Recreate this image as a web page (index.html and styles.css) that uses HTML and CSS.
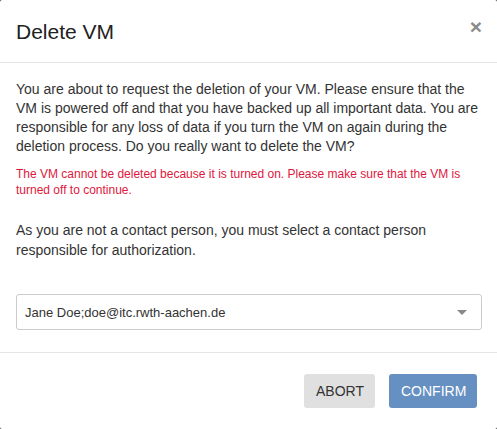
FILE: index.html
```html
<!DOCTYPE html>
<html>
<head>
<meta charset="utf-8">
<link rel="stylesheet" href="styles.css">
</head>
<body>
<div class="modal">
  <div class="modal-header">
    <h4 class="modal-title">Delete VM</h4>
    <button class="close" type="button">&times;</button>
  </div>
  <div class="modal-body">
    <p class="intro">You are about to request the deletion of your VM. Please ensure that the VM is powered off and that you have backed up all important data. You are responsible for any loss of data if you turn the VM on again during the deletion process. Do you really want to delete the VM?</p>
    <p class="error">The VM cannot be deleted because it is turned on. Please make sure that the VM is turned off to continue.</p>
    <p class="contact">As you are not a contact person, you must select a contact person responsible for authorization.</p>
    <div class="select">
      <span class="select-value">Jane Doe;doe@itc.rwth-aachen.de</span>
      <span class="caret"></span>
    </div>
  </div>
  <div class="modal-footer">
    <button class="btn btn-abort" type="button">ABORT</button>
    <button class="btn btn-confirm" type="button">CONFIRM</button>
  </div>
</div>
</body>
</html>
```

FILE: styles.css
```css
html, body {
  margin: 0;
  padding: 0;
  background: #3a3a3a;
}
body {
  font-family: "Liberation Sans", Arial, sans-serif;
  color: #333;
}
.modal {
  width: 497px;
  height: 429px;
  background: #fff;
  border-radius: 2px;
  box-sizing: border-box;
  display: flex;
  flex-direction: column;
}
.modal-header {
  height: 63px;
  box-sizing: border-box;
  border-bottom: 1px solid #e5e5e5;
  display: flex;
  align-items: center;
  justify-content: space-between;
  padding: 2px 15px 0 16px;
}
.modal-title {
  margin: 0;
  font-size: 21px;
  font-weight: normal;
  color: #222;
  line-height: 30px;
}
.close {
  border: 0;
  background: none;
  padding: 0;
  font-family: "Liberation Sans", Arial, sans-serif;
  font-size: 21px;
  font-weight: bold;
  color: #8a8a8a;
  line-height: 1;
  margin-top: -12px;
}
.modal-body {
  flex: 1;
  padding: 17px 15px 0 16px;
}
.modal-body p {
  margin: 0;
}
.intro {
  font-size: 14px;
  line-height: 19px;
}
.error {
  margin-top: 10px !important;
  font-size: 12px;
  line-height: 16px;
  color: #e0173c;
}
.contact {
  margin-top: 22px !important;
  font-size: 14px;
  line-height: 20px;
}
.select {
  margin-top: 34px;
  height: 36px;
  box-sizing: border-box;
  border: 1px solid #ccc;
  border-radius: 3px;
  display: flex;
  align-items: center;
  justify-content: space-between;
  padding: 0 14px 0 8px;
  font-size: 13px;
  color: #333;
}
.caret {
  width: 0;
  height: 0;
  border-left: 5px solid transparent;
  border-right: 5px solid transparent;
  border-top: 5px solid #888;
}
.modal-footer {
  height: 77px;
  box-sizing: border-box;
  border-top: 1px solid #e5e5e5;
  display: flex;
  align-items: center;
  justify-content: flex-end;
  gap: 14px;
  padding: 0 20px;
}
.btn {
  height: 34px;
  border: 0;
  border-radius: 3px;
  font-family: "Liberation Sans", Arial, sans-serif;
  font-size: 14px;
  padding: 0 12px;
  line-height: 34px;
}
.btn-abort {
  width: 71px;
  background: #e0e0e0;
  color: #333;
}
.btn-confirm {
  width: 88px;
  background: #6690c1;
  color: #fff;
}
```
